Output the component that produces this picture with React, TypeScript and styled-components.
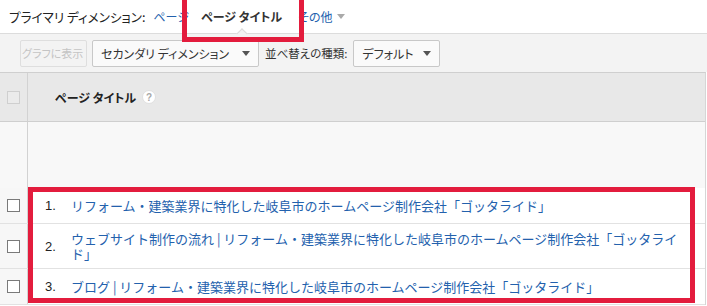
import React from 'react';
import styled, { createGlobalStyle } from 'styled-components';

const GlobalStyle = createGlobalStyle`
	html, body {
		margin: 0;
		padding: 0;
		background: #fff;
	}
	body {
		font-family: "Noto Sans CJK JP", "Noto Sans", sans-serif;
		color: #222;
	}
`;

const RED = '#e31c3d';
const LINK = '#2361ad';

const Page = styled.div`
	width: 707px;
	height: 306px;
	overflow: hidden;
	background: #fff;
`;

const DimensionBar = styled.div`
	display: flex;
	align-items: center;
	height: 34px;
	padding-left: 9px;
	border-bottom: 1px solid #dcdcdc;
	font-size: 12px;
	font-feature-settings: 'palt';
	box-sizing: border-box;
`;

const Label = styled.span`
	color: #222;
	font-size: 12.6px;
	margin-right: 8px;
`;

const DimLink = styled.a`
	color: ${LINK};
	cursor: pointer;
	display: inline-flex;
	align-items: center;
	gap: 4px;
`;

const ActiveTab = styled.span`
	position: relative;
	display: inline-flex;
	align-items: center;
	height: 34px;
	margin: 0 16px 0 12px;
	font-weight: bold;
	color: #333;

	/* small notch under the active tab */
	&::before {
		content: '';
		position: absolute;
		left: 50%;
		bottom: -1px;
		width: 7px;
		height: 7px;
		margin-left: -4px;
		background: #f3f3f3;
		border-left: 1px solid #dcdcdc;
		border-top: 1px solid #dcdcdc;
		transform: rotate(45deg) translate(2px, 2px);
	}

	/* red highlight drawn over the tab */
	&::after {
		content: '';
		position: absolute;
		top: -13px;
		bottom: -8px;
		left: -19px;
		right: -22px;
		border: 5px solid ${RED};
	}
`;

const Caret = styled.span<{ $color?: string }>`
	display: inline-block;
	width: 0;
	height: 0;
	border-left: 4px solid transparent;
	border-right: 4px solid transparent;
	border-top: 5px solid ${p => p.$color ?? '#999'};
`;

const Toolbar = styled.div`
	display: flex;
	align-items: center;
	height: 38px;
	padding-left: 20px;
	background: #f3f3f3;
	font-size: 12px;
	font-feature-settings: 'palt';
	box-sizing: border-box;
`;

const ToolButton = styled.button<{ $disabled?: boolean; $width: number }>`
	display: inline-flex;
	align-items: center;
	justify-content: space-between;
	flex: 0 0 auto;
	width: ${p => p.$width}px;
	height: 27px;
	padding: 0 ${p => (p.$disabled ? 1 : 8)}px;
	margin-right: 5px;
	border: 1px solid ${p => (p.$disabled ? '#dedede' : '#c8c8c8')};
	border-radius: 2px;
	background: ${p => (p.$disabled ? '#f3f3f3' : '#fafafa')};
	color: ${p => (p.$disabled ? '#c4c4c4' : '#333')};
	font: inherit;
	font-size: ${p => (p.$disabled ? 11 : 12)}px;
	white-space: nowrap;
	box-sizing: border-box;
	cursor: ${p => (p.$disabled ? 'default' : 'pointer')};
`;

const ToolLabel = styled.span`
	color: #333;
	font-size: 11.5px;
	white-space: nowrap;
	margin: 0 6px 0 1px;
`;

const Table = styled.div`
	border-top: 1px solid #cfcfcf;
	border-right: 1px solid #d6d6d6;
	margin-right: 1px;
`;

const Row = styled.div<{ $bg?: string; $height?: number }>`
	display: grid;
	grid-template-columns: 28px 1fr;
	min-height: ${p => p.$height ?? 36}px;
	background: ${p => p.$bg ?? '#fff'};
	box-sizing: border-box;
`;

const HeaderRow = styled(Row)`
	border-bottom: 1px solid #cfcfcf;
`;

const DataRow = styled(Row)`
	border-bottom: 1px solid #e2e2e2;
`;

const CheckCell = styled.div<{ $bg?: string }>`
	display: flex;
	align-items: center;
	justify-content: center;
	border-right: 1px solid #d2d2d2;
	background: ${p => p.$bg ?? '#f7f7f7'};
`;

const CheckBox = styled.span<{ $muted?: boolean }>`
	display: block;
	width: 11px;
	height: 11px;
	border: 1px solid ${p => (p.$muted ? '#cfcfcf' : '#7a7a7a')};
	background: ${p => (p.$muted ? '#ebebeb' : '#fff')};
	margin-left: -1px;
`;

const HeaderCell = styled.div`
	display: flex;
	align-items: center;
	gap: 6px;
	padding-left: 27px;
	font-size: 12px;
	font-weight: bold;
	font-feature-settings: 'palt';
	color: #222;
`;

const HelpIcon = styled.span`
	display: inline-flex;
	align-items: center;
	justify-content: center;
	width: 12px;
	height: 12px;
	border-radius: 50%;
	background: #fff;
	border: 1px solid #e0e0e0;
	color: #a8a8a8;
	font-size: 10px;
	font-weight: bold;
	font-family: "Liberation Sans", Arial, sans-serif;
`;

const RowGroup = styled.div`
	position: relative;

	&::after {
		content: '';
		position: absolute;
		top: -1px;
		left: 28px;
		right: 10px;
		bottom: 2px;
		border: 5px solid ${RED};
		pointer-events: none;
	}
`;

const TitleCell = styled.div`
	display: flex;
	align-items: center;
	padding: 7px 17px 7px 17px;
	font-size: 13px;
	line-height: 15px;
`;

const Index = styled.span`
	flex: 0 0 26px;
	color: #222;
	font-family: "Liberation Sans", Arial, sans-serif;
`;

const TitleLink = styled.a`
	color: ${LINK};
	cursor: pointer;
`;

const SITE = 'リフォーム・建築業界に特化した岐阜市のホームページ制作会社「ゴッタライド」';

const rows = [
	SITE,
	`ウェブサイト制作の流れ | ${SITE}`,
	`ブログ | ${SITE}`,
];

export default function App() {
	return (
		<Page>
			<GlobalStyle />
			<DimensionBar>
				<Label>プライマリ ディメンション:</Label>
				<DimLink>ページ</DimLink>
				<ActiveTab>ページ タイトル</ActiveTab>
				<DimLink>
					その他 <Caret $color="#aaa" />
				</DimLink>
			</DimensionBar>
			<Toolbar>
				<ToolButton $disabled $width={67}>グラフに表示</ToolButton>
				<ToolButton $width={167}>
					セカンダリ ディメンション <Caret $color="#555" />
				</ToolButton>
				<ToolLabel>並べ替えの種類:</ToolLabel>
				<ToolButton $width={87}>
					デフォルト <Caret $color="#555" />
				</ToolButton>
			</Toolbar>
			<Table>
				<HeaderRow $bg="#e8e8e8" $height={49}>
					<CheckCell $bg="#e8e8e8">
						<CheckBox $muted />
					</CheckCell>
					<HeaderCell>
						ページ タイトル <HelpIcon>?</HelpIcon>
					</HeaderCell>
				</HeaderRow>
				<Row $bg="#f8f8f8" $height={66}>
					<CheckCell $bg="#f8f8f8" />
					<div />
				</Row>
				<RowGroup>
					{rows.map((title, i) => (
						<DataRow key={i}>
							<CheckCell>
								<CheckBox />
							</CheckCell>
							<TitleCell>
								<Index>{i + 1}.</Index>
								<TitleLink>{title}</TitleLink>
							</TitleCell>
						</DataRow>
					))}
				</RowGroup>
			</Table>
		</Page>
	);
}
